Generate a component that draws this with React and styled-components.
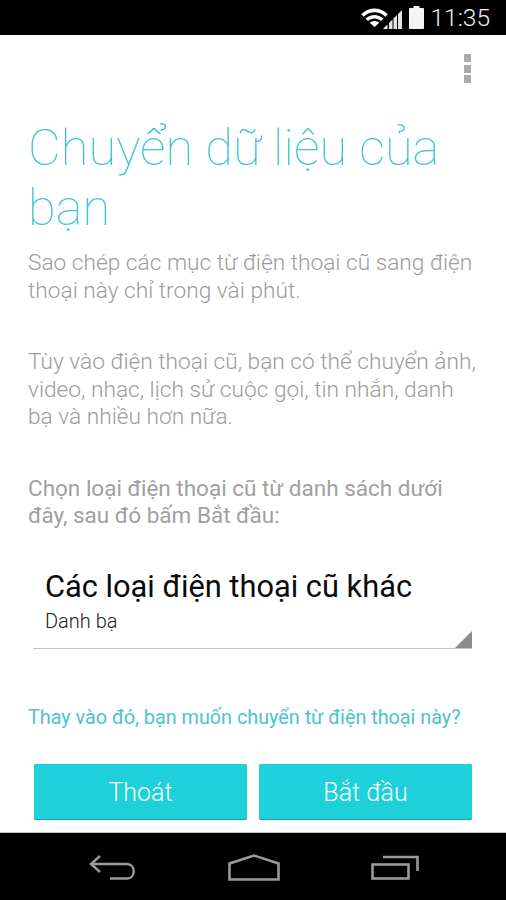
import React from 'react';
import styled, { createGlobalStyle } from 'styled-components';

const GlobalStyle = createGlobalStyle`
  html, body {
    margin: 0;
    padding: 0;
    background: #000;
  }
  * {
    box-sizing: border-box;
  }
`;

const WifiIcon = () => (
  <svg width="27" height="19" viewBox="0 0 28 20">
    <path d="M0 6.5C8 -1.5 20 -1.5 28 6.5L25.4 9.2C19 3 9 3 2.6 9.2Z" fill="#fff" />
    <path d="M4.6 11.2C10 6.2 18 6.2 23.4 11.2L20.9 13.8C17 10.2 11 10.2 7.1 13.8Z" fill="#fff" />
    <path d="M9 15.6C12 13 16 13 19 15.6L14 20Z" fill="#fff" />
  </svg>
);

const SignalIcon = () => (
  <svg width="19" height="22" viewBox="0 0 19 22">
    <path d="M0 22L4.5 17.5V22Z" fill="#fff" />
    <path d="M6 16L9.5 12.5V22H6Z" fill="#e2e2e2" />
    <path d="M10.5 11.5L14 8V22H10.5Z" fill="#e2e2e2" />
    <path d="M15 7L19 3V22H15Z" fill="#e2e2e2" />
  </svg>
);

const BatteryIcon = () => (
  <svg width="15" height="23" viewBox="0 0 15 23">
    <path d="M4.5 0H10.5V2H14C14.6 2 15 2.4 15 3V22C15 22.6 14.6 23 14 23H1C0.4 23 0 22.6 0 22V3C0 2.4 0.4 2 1 2H4.5Z" fill="#f4f4f4" />
  </svg>
);

const BackIcon = () => (
  <svg width="47" height="25" viewBox="0 0 47 25" fill="none" stroke="#9a9a9a" strokeWidth="2.4">
    <path d="M11 1L2 9L11 17" />
    <path d="M2.5 9H38C47 9 47 23.5 38 23.5H21" />
  </svg>
);

const HomeIcon = () => (
  <svg width="52" height="27" viewBox="0 0 52 27" fill="none" stroke="#9a9a9a" strokeWidth="2.6">
    <path d="M1.5 25.5V9.5L26 1.5L50.5 9.5V25.5Z" />
  </svg>
);

const RecentIcon = () => (
  <svg width="48" height="25" viewBox="0 0 48 25" fill="none" stroke="#9a9a9a" strokeWidth="2.6">
    <rect x="1.5" y="9.5" width="36" height="14" />
    <path d="M12 2H46.5V16" />
  </svg>
);

const App = () => {
  return (
    <Screen>
      <GlobalStyle />
      <StatusBar>
        <WifiIcon />
        <SignalIcon />
        <BatteryIcon />
        <Clock>11:35</Clock>
      </StatusBar>
      <Content>
        <MenuRow>
          <MenuDots>
            <i />
            <i />
            <i />
          </MenuDots>
        </MenuRow>
        <Title>Chuyển dữ liệu của bạn</Title>
        <Intro>Sao chép các mục từ điện thoại cũ sang điện thoại này chỉ trong vài phút.</Intro>
        <Details>
          Tùy vào điện thoại cũ, bạn có thể chuyển ảnh, video, nhạc, lịch sử cuộc gọi, tin nhắn, danh bạ và nhiều hơn nữa.
        </Details>
        <Prompt>Chọn loại điện thoại cũ từ danh sách dưới đây, sau đó bấm Bắt đầu:</Prompt>
        <Spinner>
          <SpinnerTitle>Các loại điện thoại cũ khác</SpinnerTitle>
          <SpinnerSub>Danh bạ</SpinnerSub>
        </Spinner>
        <SwitchLink>Thay vào đó, bạn muốn chuyển từ điện thoại này?</SwitchLink>
        <Buttons>
          <ActionButton>Thoát</ActionButton>
          <ActionButton>Bắt đầu</ActionButton>
        </Buttons>
      </Content>
      <NavBar>
        <BackIcon />
        <HomeIcon />
        <RecentIcon />
      </NavBar>
    </Screen>
  );
};

export default App;

const Screen = styled.div`
  display: flex;
  flex-direction: column;
  width: 506px;
  height: 900px;
  overflow: hidden;
  font-family: Roboto, 'Noto Sans', sans-serif;
`;

const StatusBar = styled.div`
  display: flex;
  align-items: center;
  justify-content: flex-end;
  height: 35px;
  padding-right: 16px;
  background: #000;

  & > svg:nth-child(2) {
    margin-left: -5px;
  }
  & > svg:nth-child(3) {
    margin-left: 7px;
  }
`;

const Clock = styled.span`
  margin-left: 6px;
  font-size: 24.5px;
  font-weight: 300;
  line-height: 35px;
  color: #f2f2f2;
`;

const Content = styled.div`
  display: flex;
  flex-direction: column;
  height: 798px;
  padding: 0 34px 0 28px;
  background: #fff;
  border-bottom: 1px solid #c4c4c4;
`;

const MenuRow = styled.div`
  display: flex;
  justify-content: flex-end;
  padding-top: 19px;
  margin-right: 1px;
`;

const MenuDots = styled.div`
  display: flex;
  flex-direction: column;
  gap: 2.5px;

  & > i {
    display: block;
    width: 7.5px;
    height: 8px;
    background: #ababab;
  }
`;

const Title = styled.h1`
  margin: 35px -6px 0 0;
  font-size: 50.6px;
  font-weight: 100;
  line-height: 60px;
  color: #3fc4d4;
`;

const Intro = styled.p`
  margin: 11px -8px 0 0;
  font-size: 22.7px;
  font-weight: 300;
  line-height: 27.5px;
  color: #9c9c9c;
`;

const Details = styled(Intro)`
  margin-top: 44px;
`;

const Prompt = styled(Intro)`
  margin-top: 44px;
  font-size: 22.5px;
  font-weight: 400;
  color: #a0a0a0;
`;

const Spinner = styled.div`
  position: relative;
  display: flex;
  flex-direction: column;
  height: 99px;
  margin: 20px 0 0 5px;
  padding: 19px 0 0 12px;
  border-bottom: 1px solid #c4c4c4;

  &::after {
    content: '';
    position: absolute;
    right: 0;
    bottom: 0;
    border-style: solid;
    border-width: 0 0 17px 17px;
    border-color: transparent transparent #8c8c8c transparent;
  }
`;

const SpinnerTitle = styled.span`
  font-size: 30.8px;
  line-height: 36px;
  color: #0a0a0a;
`;

const SpinnerSub = styled.span`
  margin-top: 4px;
  font-size: 20px;
  font-weight: 300;
  line-height: 24px;
  color: #222;
`;

const SwitchLink = styled.a`
  margin: 56px -8px 0 0;
  font-size: 19.8px;
  line-height: 26px;
  color: #4cc3d0;
`;

const Buttons = styled.div`
  display: grid;
  grid-template-columns: 213px 213px;
  gap: 12px;
  margin: 33px 0 0 6px;
`;

const ActionButton = styled.button`
  height: 56px;
  padding: 3px 0 0;
  font-family: inherit;
  font-size: 25px;
  font-weight: 300;
  color: #fff;
  background: #1dd0d9;
  border: none;
  border-bottom: 1px solid #17a3aa;
  border-radius: 2px;
  box-shadow: 0 0 1px rgba(0, 120, 130, 0.5);
`;

const NavBar = styled.div`
  display: flex;
  align-items: center;
  justify-content: space-between;
  height: 67px;
  padding: 1px 87px 0 89px;
  background: #000;
`;
